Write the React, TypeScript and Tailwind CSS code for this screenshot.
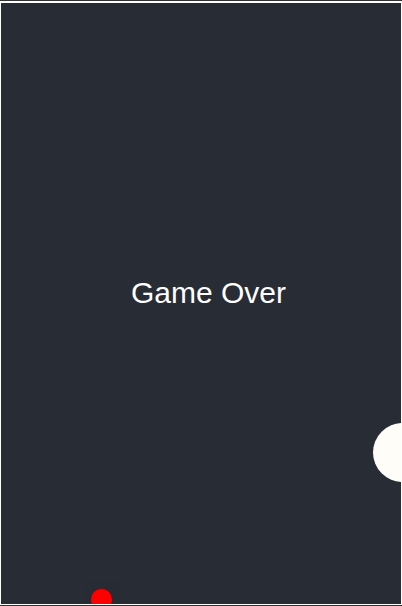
import React from 'react'

const App: React.FC = () => {
  return (
    <div className="w-[402px] h-[606px] bg-white border-t border-b border-[#333] overflow-hidden">
      <div className="relative mt-[2px] ml-px w-[400px] h-[601px] bg-[#282c34] overflow-hidden">
        <div className="absolute inset-x-0 top-[270px] flex justify-center pl-[15px]">
          <span className="text-[30px] leading-[40px] text-white font-['Liberation_Sans',Arial,sans-serif]">
            Game Over
          </span>
        </div>
        {/* player */}
        <div className="absolute left-[372px] top-[420px] w-[59px] h-[59px] rounded-full bg-[#fffdf8]" />
        {/* ball */}
        <div className="absolute left-[84px] top-[578px] w-[36px] h-[26px] rounded-md bg-[#262a31] opacity-40" />
        <div className="absolute left-[90px] top-[586px] w-[21px] h-[21px] rounded-full bg-[#ff0000]" />
      </div>
    </div>
  )
}

export default App
